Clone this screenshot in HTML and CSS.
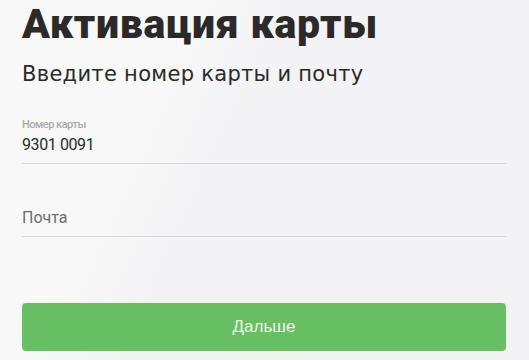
FILE: index.html
```html
<!DOCTYPE html>
<html lang="ru">
<head>
<meta charset="utf-8">
<link rel="stylesheet" href="styles.css">
</head>
<body>
<main class="page">
  <h1 class="title">Активация карты</h1>
  <p class="subtitle">Введите номер карты и почту</p>
  <div class="field field--filled">
    <span class="field__label">Номер карты</span>
    <span class="field__value">9301 0091</span>
  </div>
  <div class="field">
    <span class="field__placeholder">Почта</span>
  </div>
  <button class="btn" type="button">Дальше</button>
</main>
</body>
</html>
```
FILE: styles.css
```css
html, body {
  margin: 0;
  padding: 0;
  height: 100%;
}
body {
  background: linear-gradient(115deg, #f8f8f9 0%, #f8f8f9 30%, #f3f3f5 42%, #f3f3f5 100%);
  font-family: Roboto, "Liberation Sans", sans-serif;
  color: #2a2a2a;
}
.page {
  display: flex;
  flex-direction: column;
  padding: 2px 23px 0 22px;
}
.title {
  margin: 0;
  font-size: 41px;
  line-height: 44px;
  font-weight: 900;
  color: #2b2a29;
  letter-spacing: 0.7px;
}
.subtitle {
  margin: 14px 0 0;
  font-family: "DejaVu Sans", sans-serif;
  font-size: 21px;
  line-height: 28px;
  color: #2a2a2a;
  letter-spacing: 0.3px;
}
.field {
  display: flex;
  flex-direction: column;
  border-bottom: 1px solid #d9d9dc;
  height: 44px;
  justify-content: flex-end;
  padding-bottom: 8px;
  box-sizing: border-box;
}
.field--filled {
  margin-top: 26px;
  height: 50px;
}
.field + .field {
  margin-top: 29px;
}
.field__label {
  font-size: 11px;
  line-height: 13px;
  font-weight: 500;
  color: #ababab;
  letter-spacing: -0.5px;
}
.field__value {
  margin-top: 4px;
  font-size: 16px;
  line-height: 20px;
  color: #2a2a2a;
  letter-spacing: -0.4px;
}
.field__placeholder {
  font-size: 16px;
  line-height: 20px;
  color: #6c6c72;
}
.btn {
  margin-top: 66px;
  height: 48px;
  border: 0;
  border-radius: 4px;
  background: #67c162;
  color: #eef8ec;
  font-family: "Liberation Sans", Arial, sans-serif;
  font-size: 17px;
  cursor: pointer;
}
```
